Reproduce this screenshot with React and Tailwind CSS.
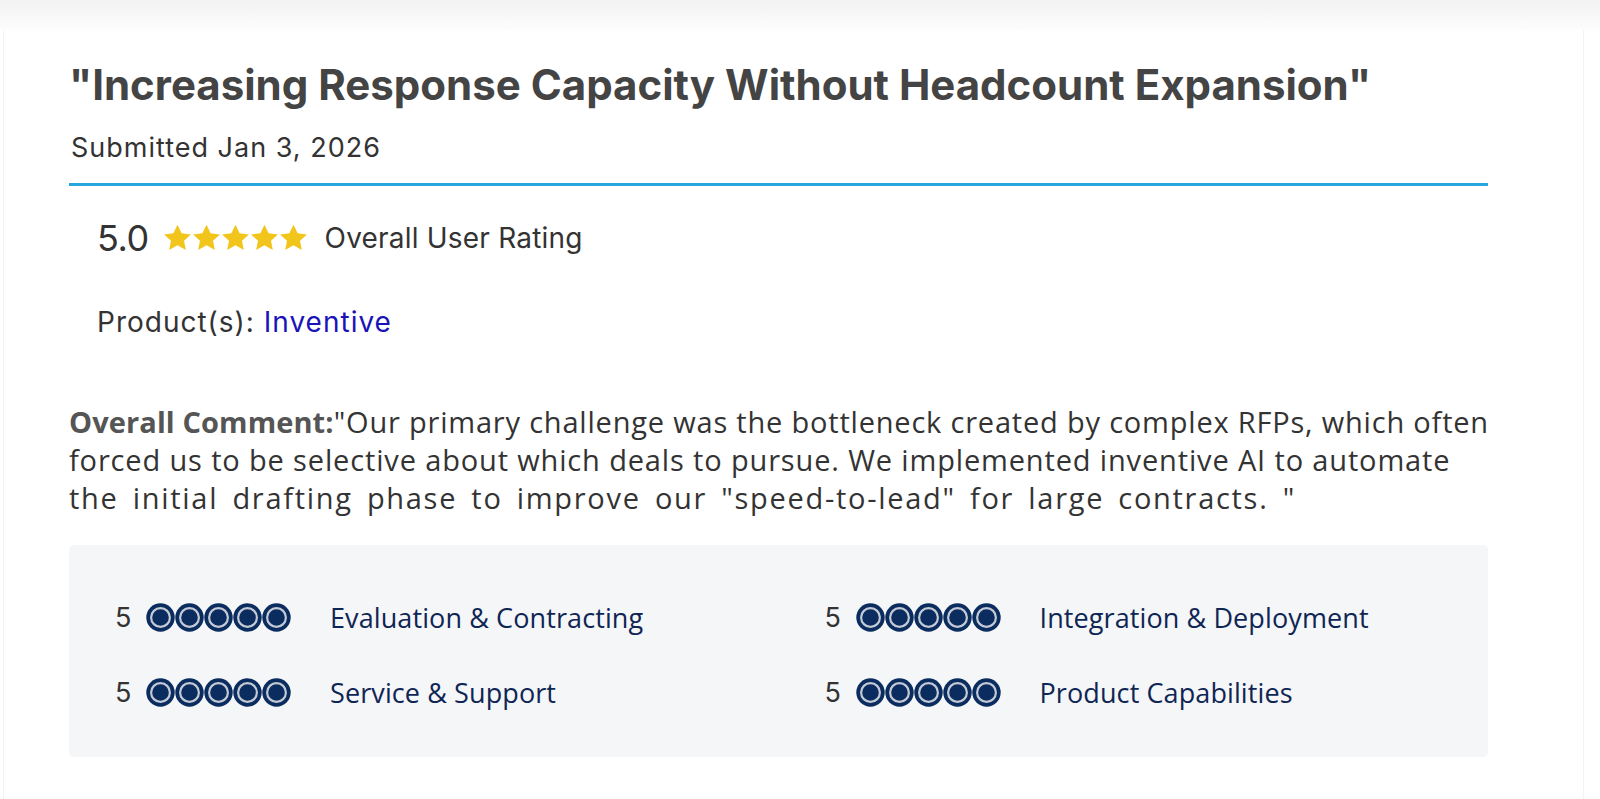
import React from 'react';

const Star = () => (
    <svg width="29" height="28" viewBox="0 0 24 23" className="shrink-0">
        <path d="M12 .6l3.4 7 7.7.9-5.7 5.3 1.5 7.6L12 17.6l-6.9 3.8 1.5-7.6L.9 8.5l7.7-.9z" fill="#f2c51c" />
    </svg>
);

const Dot = () => (
    <svg width="29" height="29" viewBox="0 0 29 29" className="shrink-0">
        <circle cx="14.5" cy="14.5" r="14.2" fill="#0b2c5e" />
        <circle cx="14.5" cy="14.5" r="9.4" fill="none" stroke="#c3cad6" strokeWidth="2.2" />
    </svg>
);

const ratings = [
    { score: 5, label: 'Evaluation & Contracting' },
    { score: 5, label: 'Integration & Deployment' },
    { score: 5, label: 'Service & Support' },
    { score: 5, label: 'Product Capabilities' },
];

const RatingItem = ({ score, label }) => (
    <div className="flex h-[30px] items-center pl-[46px]">
        <span className="w-[31px] text-[27px] leading-none text-[#333]" style={{ fontFamily: 'Inter, sans-serif' }}>{score}</span>
        <div className="flex">
            {[0, 1, 2, 3, 4].map(i => <Dot key={i} />)}
        </div>
        <span className="ml-[39px] text-[27px] tracking-[0.1px] leading-none text-[#0f2554]">{label}</span>
    </div>
);

export default function App() {
    return (
        <div className="min-h-[799px] bg-white" style={{ fontFamily: '"Open Sans", "Liberation Sans", sans-serif' }}>
            <div className="h-[30px] bg-gradient-to-b from-[#f2f2f2] to-[#fdfdfd]" />
            <div className="mx-[3px] w-[1581px] border-x border-[#f3f3f3] pl-[65px] pr-[95px] pt-[27px] pb-[42px]">
                <div style={{ fontFamily: 'Inter, "Liberation Sans", sans-serif' }}>
                    <h1 className="text-[42px] font-bold leading-[56px] text-[#444]">
                        "Increasing Response Capacity Without Headcount Expansion"
                    </h1>
                    <div className="mt-[17px] pl-[2px] text-[27px] tracking-[1px] leading-[36px] text-[#333]">
                        Submitted Jan 3, 2026
                    </div>
                    <div className="mt-[17px] h-[3px] bg-[#27a6dd]" />

                    <div className="mt-[30px] flex h-[44px] items-center pl-[28px]">
                        <span className="text-[36px] leading-none text-[#333] tracking-[-0.5px]">5.0</span>
                        <div className="ml-[14px] flex">
                            {[0, 1, 2, 3, 4].map(i => <Star key={i} />)}
                        </div>
                        <span className="ml-[17px] text-[28px] tracking-[0.2px] leading-none text-[#333]">Overall User Rating</span>
                    </div>

                    <div className="mt-[44px] pl-[28px] text-[28px] tracking-[1px] leading-[36px] text-[#333]">
                        Product(s): <span className="text-[#1a14b8]">Inventive</span>
                    </div>
                </div>

                {/* comment: lines broken as in the source layout */}
                <p className="mt-[63px] whitespace-nowrap text-[29px] leading-[38px] text-[#333]">
                    <span className="block tracking-[0.8px]">
                        <span className="font-bold text-[#555] tracking-[0.1px]">Overall Comment:</span>"Our primary challenge was the bottleneck created by complex RFPs, which often
                    </span>
                    <span className="block tracking-[0.85px]">
                        forced us to be selective about which deals to pursue. We implemented inventive AI to automate
                    </span>
                    <span className="block tracking-[1.7px] [word-spacing:5px]">
                        the initial drafting phase to improve our "speed-to-lead" for large contracts. "
                    </span>
                </p>

                <div className="mt-[28px] rounded-[5px] bg-[#f5f6f8] pt-[57px] pb-[50px]">
                    <div className="grid grid-cols-2 gap-y-[45px]">
                        {ratings.map(r => <RatingItem key={r.label} {...r} />)}
                    </div>
                </div>
            </div>
        </div>
    );
}
